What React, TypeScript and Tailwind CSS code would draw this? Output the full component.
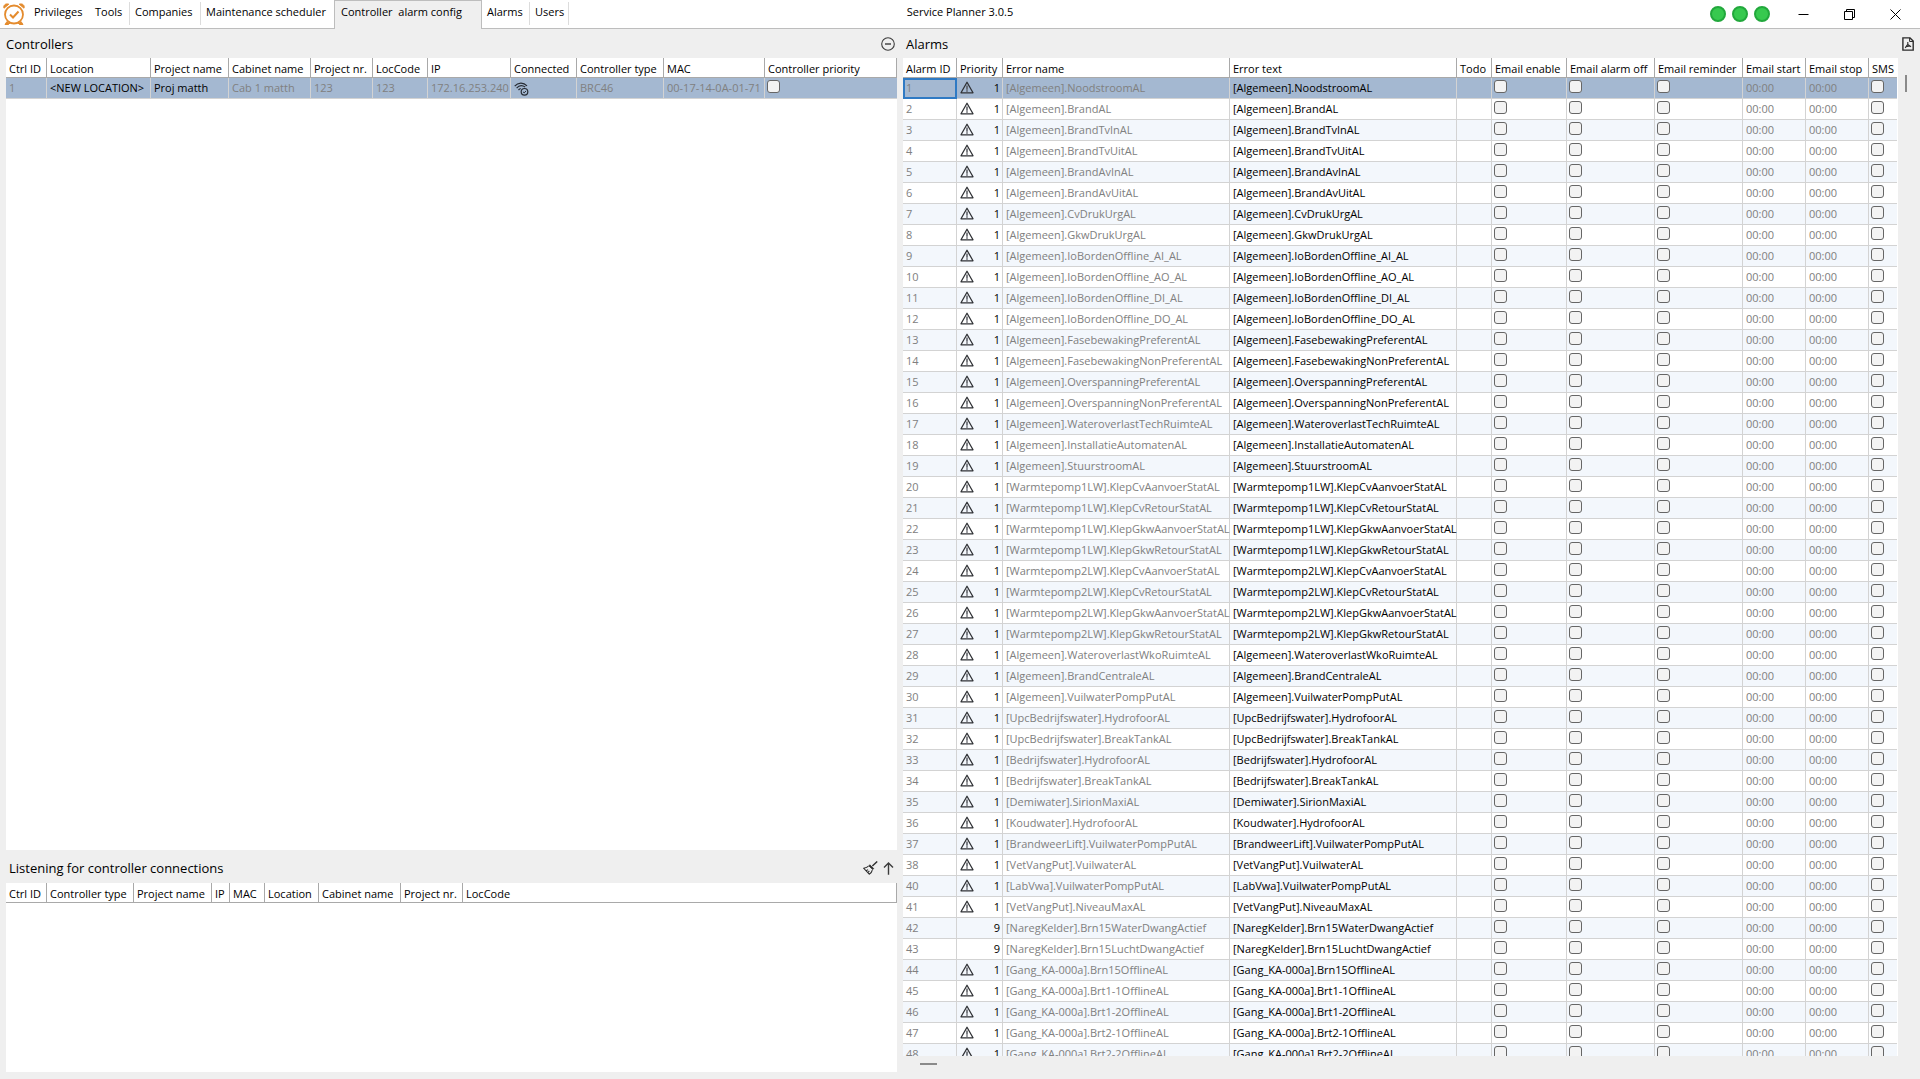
import React from 'react';

interface Alarm {
  id: number;
  name: string;
  priority?: number;
}

const ALARMS: Alarm[] = [
  { id: 1, name: '[Algemeen].NoodstroomAL' },
  { id: 2, name: '[Algemeen].BrandAL' },
  { id: 3, name: '[Algemeen].BrandTvInAL' },
  { id: 4, name: '[Algemeen].BrandTvUitAL' },
  { id: 5, name: '[Algemeen].BrandAvInAL' },
  { id: 6, name: '[Algemeen].BrandAvUitAL' },
  { id: 7, name: '[Algemeen].CvDrukUrgAL' },
  { id: 8, name: '[Algemeen].GkwDrukUrgAL' },
  { id: 9, name: '[Algemeen].IoBordenOffline_AI_AL' },
  { id: 10, name: '[Algemeen].IoBordenOffline_AO_AL' },
  { id: 11, name: '[Algemeen].IoBordenOffline_DI_AL' },
  { id: 12, name: '[Algemeen].IoBordenOffline_DO_AL' },
  { id: 13, name: '[Algemeen].FasebewakingPreferentAL' },
  { id: 14, name: '[Algemeen].FasebewakingNonPreferentAL' },
  { id: 15, name: '[Algemeen].OverspanningPreferentAL' },
  { id: 16, name: '[Algemeen].OverspanningNonPreferentAL' },
  { id: 17, name: '[Algemeen].WateroverlastTechRuimteAL' },
  { id: 18, name: '[Algemeen].InstallatieAutomatenAL' },
  { id: 19, name: '[Algemeen].StuurstroomAL' },
  { id: 20, name: '[Warmtepomp1LW].KlepCvAanvoerStatAL' },
  { id: 21, name: '[Warmtepomp1LW].KlepCvRetourStatAL' },
  { id: 22, name: '[Warmtepomp1LW].KlepGkwAanvoerStatAL' },
  { id: 23, name: '[Warmtepomp1LW].KlepGkwRetourStatAL' },
  { id: 24, name: '[Warmtepomp2LW].KlepCvAanvoerStatAL' },
  { id: 25, name: '[Warmtepomp2LW].KlepCvRetourStatAL' },
  { id: 26, name: '[Warmtepomp2LW].KlepGkwAanvoerStatAL' },
  { id: 27, name: '[Warmtepomp2LW].KlepGkwRetourStatAL' },
  { id: 28, name: '[Algemeen].WateroverlastWkoRuimteAL' },
  { id: 29, name: '[Algemeen].BrandCentraleAL' },
  { id: 30, name: '[Algemeen].VuilwaterPompPutAL' },
  { id: 31, name: '[UpcBedrijfswater].HydrofoorAL' },
  { id: 32, name: '[UpcBedrijfswater].BreakTankAL' },
  { id: 33, name: '[Bedrijfswater].HydrofoorAL' },
  { id: 34, name: '[Bedrijfswater].BreakTankAL' },
  { id: 35, name: '[Demiwater].SirionMaxiAL' },
  { id: 36, name: '[Koudwater].HydrofoorAL' },
  { id: 37, name: '[BrandweerLift].VuilwaterPompPutAL' },
  { id: 38, name: '[VetVangPut].VuilwaterAL' },
  { id: 40, name: '[LabVwa].VuilwaterPompPutAL' },
  { id: 41, name: '[VetVangPut].NiveauMaxAL' },
  { id: 42, name: '[NaregKelder].Brn15WaterDwangActief', priority: 9 },
  { id: 43, name: '[NaregKelder].Brn15LuchtDwangActief', priority: 9 },
  { id: 44, name: '[Gang_KA-000a].Brn15OfflineAL' },
  { id: 45, name: '[Gang_KA-000a].Brt1-1OfflineAL' },
  { id: 46, name: '[Gang_KA-000a].Brt1-2OfflineAL' },
  { id: 47, name: '[Gang_KA-000a].Brt2-1OfflineAL' },
  { id: 48, name: '[Gang_KA-000a].Brt2-2OfflineAL' },
];

// The last column of every grid has no width and takes what is left
const CONTROLLER_COLUMNS = [
  { label: 'Ctrl ID', width: 'w-[41px]' },
  { label: 'Location', width: 'w-[104px]' },
  { label: 'Project name', width: 'w-[78px]' },
  { label: 'Cabinet name', width: 'w-[82px]' },
  { label: 'Project nr.', width: 'w-[62px]' },
  { label: 'LocCode', width: 'w-[55px]' },
  { label: 'IP', width: 'w-[83px]' },
  { label: 'Connected', width: 'w-[66px]' },
  { label: 'Controller type', width: 'w-[87px]' },
  { label: 'MAC', width: 'w-[101px]' },
  { label: 'Controller priority', width: '' },
];

const LISTENING_COLUMNS = [
  { label: 'Ctrl ID', width: 'w-[41px]' },
  { label: 'Controller type', width: 'w-[87px]' },
  { label: 'Project name', width: 'w-[78px]' },
  { label: 'IP', width: 'w-[18px]' },
  { label: 'MAC', width: 'w-[35px]' },
  { label: 'Location', width: 'w-[54px]' },
  { label: 'Cabinet name', width: 'w-[82px]' },
  { label: 'Project nr.', width: 'w-[62px]' },
  { label: 'LocCode', width: '' },
];

const ALARM_COLUMNS = [
  { label: 'Alarm ID', width: 'w-[54px]' },
  { label: 'Priority', width: 'w-[46px]' },
  { label: 'Error name', width: 'w-[227px]' },
  { label: 'Error text', width: 'w-[227px]' },
  { label: 'Todo', width: 'w-[35px]' },
  { label: 'Email enable', width: 'w-[75px]' },
  { label: 'Email alarm off', width: 'w-[88px]' },
  { label: 'Email reminder', width: 'w-[88px]' },
  { label: 'Email start', width: 'w-[63px]' },
  { label: 'Email stop', width: 'w-[63px]' },
  { label: 'SMS', width: '' },
];

const TABS = [
  { label: 'Privileges', className: 'w-[61px] border-transparent' },
  { label: 'Tools', className: 'w-[40px] border-[#dcdcdc]' },
  { label: 'Companies', className: 'w-[71px] border-[#dcdcdc]' },
  { label: 'Maintenance scheduler', className: 'w-[133px] border-transparent' },
  { label: 'Controller  alarm config', active: true },
  { label: 'Alarms', className: 'w-[48px] border-[#dcdcdc]' },
  { label: 'Users', className: 'w-[39px] border-[#dcdcdc]' },
];

const LogoIcon = () => (
  <svg className="h-[24px] w-[24px]" viewBox="0 0 24 24" fill="none" stroke="#e48b2d" strokeWidth="1.8">
    <circle cx="12" cy="12.5" r="9" />
    <path d="M2 6.2C1 3.5 3.5 1 6.8 2.2L2 6.2zM22 6.2c1-2.7-1.500-5.200-4.800-4L22 6.200z" fill="#e48b2d" strokeWidth="1" />
    <path d="M5 19.500l-2 3h3.500l1.500-1.500M19 19.500l2 3h-3.500L16 21" fill="#e48b2d" strokeWidth="1" />
    <path d="M8 12.500l3 3 5.500-6" strokeWidth="2" />
  </svg>
);

const ConnectedIcon = () => (
  <svg className="mt-[2px] h-[14px] w-[15px]" viewBox="0 0 15 14" fill="none" stroke="#262b33" strokeWidth="1.2">
    <path d="M.7 4.200C4 .2 9.500.1 13 3.800M2.600 6.100c2.400-2.700 5.800-2.900 8.600-1M4.500 8c1-1.200 1.600-1.400 2.300-1.500" />
    <circle cx="10.500" cy="9.800" r="3.300" />
    <path d="M9 9.800l1.200 1.100 1.800-2" strokeWidth="1" />
  </svg>
);

const WarningIcon = () => (
  <svg className="h-[13px] w-[14px]" viewBox="0 0 14 13" fill="none" stroke="#303236" strokeWidth="1.3">
    <path d="M7 1.200L13 11.800H1L7 1.200z" strokeLinejoin="round" />
    <path d="M7 4.500v4.200M7 9.300v1.400" stroke="#55585e" strokeWidth="1.500" />
  </svg>
);

const BroomIcon = () => (
  <svg className="h-[14px] w-[15px]" viewBox="0 0 15 14" fill="none" stroke="#2d2d2d" strokeWidth="1.100">
    <path d="M14.200.5L9.400 5" strokeWidth="1.400" />
    <path d="M6.800 3.800l3.900 3.700-.9 1.100-3.900-3.700z" fill="#2d2d2d" strokeWidth=".8" />
    <path d="M5.500 5.100C4.300 6.300 2.500 6.900.7 7.300l5.500 5.900c1.600-.7 2.700-2.200 3.100-4M3.200 9.800l1.800-1.200M5 11.500l1.300-1.700" />
  </svg>
);

const ArrowUpIcon = () => (
  <svg className="h-[13px] w-[11px]" viewBox="0 0 11 13" fill="none" stroke="#3c3c3c" strokeWidth="1.400">
    <path d="M5.500 12.800V1.200M1 5.500l4.500-4.400L10 5.500" />
  </svg>
);

const CollapseIcon = () => (
  <svg className="h-[14px] w-[14px]" viewBox="0 0 14 14" fill="none" stroke="#3c3c3c" strokeWidth="1.100">
    <circle cx="7" cy="7" r="6.300" />
    <path d="M4 7h6" strokeWidth="1.400" />
  </svg>
);

const PdfIcon = () => (
  <svg className="h-[14px] w-[12px]" viewBox="0 0 12 14" fill="none" stroke="#2d2d2d" strokeWidth="1.400">
    <path d="M.9.900H8l3.200 3.200v9H.9V.9z" />
    <path d="M7.600.9v3.600h3.600" strokeWidth="1" />
    <path d="M5.800 5v2.300L3.200 10.800M5.800 7.500l3.200 2.300M4 9.600l4-.6" strokeWidth="1.100" />
  </svg>
);

const CheckCell: React.FC<{ label: string }> = ({ label }) => (
  <input
    type="checkbox"
    aria-label={label}
    className="mx-[2px] mt-[2px] block h-[13px] w-[13px] appearance-none rounded-[3px] border border-[#666] bg-[#f3f3f3]"
  />
);

const GridHead: React.FC<{ columns: { label: string; width: string }[]; openEnd?: boolean }> = ({ columns, openEnd }) => (
  <thead>
    <tr className="h-[20px] bg-white">
      {columns.map((col) => (
        <th
          key={col.label}
          className={`${col.width} ${openEnd ? 'last:border-r-0' : ''} border-r border-b border-[#a9a9a9] px-[3px] pt-[3px] pb-0 text-left font-normal leading-4`}
        >
          {col.label}
        </th>
      ))}
    </tr>
  </thead>
);

const TABLE = 'w-full table-fixed border-separate border-spacing-0 whitespace-nowrap';
const CELL = 'h-[21px] border-r border-b border-[#d3d3d3] p-0 leading-5 last:border-r-0';

const TitleBar = () => (
  <header className="grid h-[29px] grid-cols-[1fr_auto_1fr] border-b border-[#bdbdbd] bg-white">
    <nav className="flex">
      <div className="w-[29px] shrink-0 pl-[2px] pt-[2px]">
        <LogoIcon />
      </div>
      {TABS.map((tab) =>
        tab.active ? (
          <button
            key={tab.label}
            className="-mb-px w-[148px] shrink-0 whitespace-pre border border-b-0 border-[#bdbdbd] bg-[#efefef] pb-[5px] pl-[6px] text-left"
          >
            {tab.label}
          </button>
        ) : (
          <button
            key={tab.label}
            className={`${tab.className} mt-[2px] h-[23px] shrink-0 whitespace-nowrap border-r pb-[2px] pl-[5px] text-left`}
          >
            {tab.label}
          </button>
        ),
      )}
    </nav>
    <h1 className="leading-6">Service Planner 3.0.5</h1>
    <div className="flex items-center justify-end pr-[2px]">
      <div className="mr-[10px] flex gap-[6px]">
        {[0, 1, 2].map((i) => (
          <span key={i} className="h-4 w-4 rounded-full border-2 border-[#22a83c] bg-[#37c94f]" />
        ))}
      </div>
      <button aria-label="Minimize" className="flex h-7 w-[46px] items-center justify-center">
        <svg className="h-[11px] w-[11px]" viewBox="0 0 11 11" stroke="#000" fill="none">
          <path d="M.5 5.500h10" />
        </svg>
      </button>
      <button aria-label="Restore" className="flex h-7 w-[46px] items-center justify-center">
        <svg className="h-[11px] w-[11px]" viewBox="0 0 11 11" stroke="#000" fill="none">
          <path d="M.5 2.500h8v8h-8zM2.500 2.500v-2h8v8h-2" />
        </svg>
      </button>
      <button aria-label="Close" className="flex h-7 w-[46px] items-center justify-center">
        <svg className="h-[11px] w-[11px]" viewBox="0 0 11 11" stroke="#000" fill="none">
          <path d="M.5.500l10 10M10.500.500l-10 10" />
        </svg>
      </button>
    </div>
  </header>
);

const ControllersPanel = () => (
  <section className="flex min-h-0 flex-1 flex-col">
    <div className="flex h-[29px] items-center justify-between pr-[2px]">
      <h2 className="pt-[2px] text-[13px]">Controllers</h2>
      <button aria-label="Collapse controllers">
        <CollapseIcon />
      </button>
    </div>
    <div className="min-h-0 flex-1 overflow-hidden bg-white">
      <table className={TABLE}>
        <GridHead columns={CONTROLLER_COLUMNS} />
        <tbody>
          <tr className="bg-[#a4b8d1] text-[#808080]">
            <td className={`${CELL} pl-[3px]`}>1</td>
            <td className={`${CELL} pl-[3px] text-black`}>&lt;NEW LOCATION&gt;</td>
            <td className={`${CELL} pl-[3px] text-black`}>Proj matth</td>
            <td className={`${CELL} pl-[3px]`}>Cab 1 matth</td>
            <td className={`${CELL} pl-[3px]`}>123</td>
            <td className={`${CELL} pl-[3px]`}>123</td>
            <td className={`${CELL} pl-[3px]`}>172.16.253.240</td>
            <td className={`${CELL} pl-[3px]`}>
              <ConnectedIcon />
            </td>
            <td className={`${CELL} pl-[3px]`}>BRC46</td>
            <td className={`${CELL} pl-[3px]`}>00-17-14-0A-01-71</td>
            <td className={`${CELL} align-top`}>
              <CheckCell label="Controller priority" />
            </td>
          </tr>
        </tbody>
      </table>
    </div>
  </section>
);

const ListeningPanel = () => (
  <section>
    <div className="flex h-[33px] items-center justify-between pl-[3px] pr-[3px] pt-[3px]">
      <h2 className="pt-[2px] text-[13px]">Listening for controller connections</h2>
      <div className="flex items-center gap-[5px]">
        <button aria-label="Clear list">
          <BroomIcon />
        </button>
        <button aria-label="Move up">
          <ArrowUpIcon />
        </button>
      </div>
    </div>
    <div className="h-[189px] bg-white">
      <table className={TABLE}>
        <GridHead columns={LISTENING_COLUMNS} />
      </table>
    </div>
  </section>
);

const rowColor = (index: number) => {
  if (index === 0) return 'bg-[#a4b8d1]';
  return index % 2 === 0 ? 'bg-[#f3f7fc]' : 'bg-white';
};

const AlarmsPanel = () => (
  <section className="flex min-h-0 min-w-0 flex-col">
    <div className="flex h-[29px] items-center justify-between pl-[3px] pr-[6px]">
      <h2 className="pt-[2px] text-[13px]">Alarms</h2>
      <button aria-label="Export to PDF">
        <PdfIcon />
      </button>
    </div>
    <div className="flex min-h-0 flex-1">
      <div className="min-w-0 flex-1 overflow-hidden bg-white pr-px">
        <table className={TABLE}>
          <GridHead columns={ALARM_COLUMNS} openEnd />
          <tbody>
            {ALARMS.map((alarm, index) => (
              <tr key={alarm.id} className={`${rowColor(index)} text-[#808080]`}>
                <td className={`${CELL} pl-[3px] ${index === 0 ? 'outline-2 -outline-offset-2 outline-[#2f7ac4]' : ''}`}>
                  {alarm.id}
                </td>
                <td className={`${CELL} pl-[3px] pr-[2px] text-black`}>
                  <div className="flex items-center justify-end">
                    {!alarm.priority && (
                      <span className="mr-auto pb-[2px]">
                        <WarningIcon />
                      </span>
                    )}
                    {alarm.priority ?? 1}
                  </div>
                </td>
                <td className={`${CELL} pl-[3px]`}>{alarm.name}</td>
                <td className={`${CELL} pl-[3px] text-black`}>{alarm.name}</td>
                <td className={CELL} />
                <td className={`${CELL} align-top`}>
                  <CheckCell label={`Email enable ${alarm.id}`} />
                </td>
                <td className={`${CELL} align-top`}>
                  <CheckCell label={`Email alarm off ${alarm.id}`} />
                </td>
                <td className={`${CELL} align-top`}>
                  <CheckCell label={`Email reminder ${alarm.id}`} />
                </td>
                <td className={`${CELL} pl-[3px]`}>00:00</td>
                <td className={`${CELL} pl-[3px]`}>00:00</td>
                <td className={`${CELL} align-top`}>
                  <CheckCell label={`SMS ${alarm.id}`} />
                </td>
              </tr>
            ))}
          </tbody>
        </table>
      </div>
      <div className="w-[22px] pl-[7px] pt-[17px]">
        <div className="h-[17px] w-[2px] bg-[#8a8a8a]" />
      </div>
    </div>
    <div className="h-[23px] pl-[17px] pt-[7px]">
      <div className="h-[2px] w-[17px] bg-[#8a8a8a]" />
    </div>
  </section>
);

export default function App() {
  return (
    <div className="flex h-screen flex-col overflow-hidden bg-[#efefef] font-['Open_Sans',sans-serif] text-[11px] text-black">
      <TitleBar />
      <main className="grid min-h-0 flex-1 grid-cols-[903fr_1017fr]">
        <div className="flex min-h-0 min-w-0 flex-col px-[6px] pb-[7px]">
          <ControllersPanel />
          <ListeningPanel />
        </div>
        <AlarmsPanel />
      </main>
    </div>
  );
}
